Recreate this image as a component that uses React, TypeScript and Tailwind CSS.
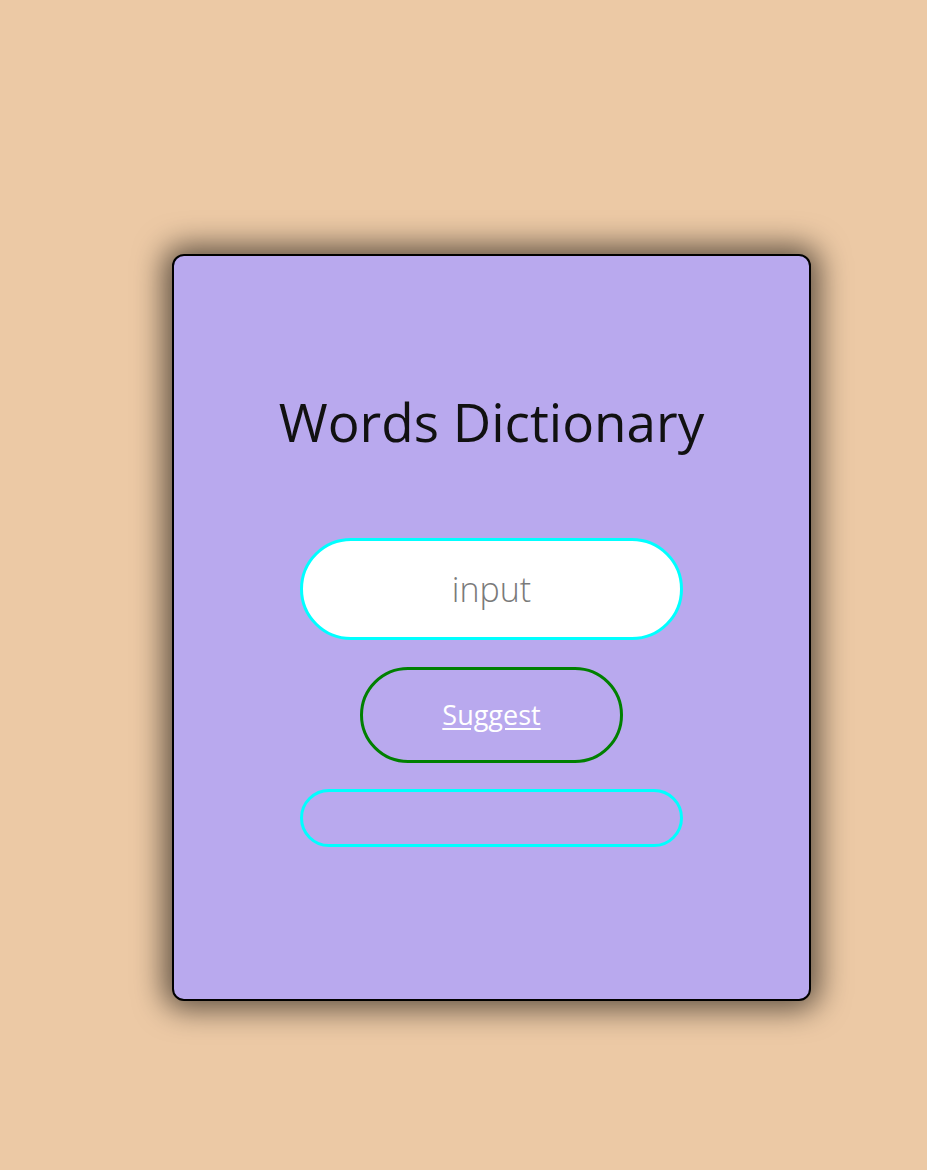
import { useState } from "react";

const App = () => {
  const [word, setWord] = useState("");

  return (
    <div
      className="min-h-[1170px] w-full bg-[#ecc9a5] pt-[254px] pl-[172px]"
      style={{ fontFamily: '"Open Sans", "Noto Sans", sans-serif' }}
    >
      <div className="w-[639px] h-[747px] box-border border-2 border-black rounded-[12px] bg-[#b9a9ee] shadow-[0_0_30px_8px_rgba(0,0,0,0.6)] flex flex-col items-center">
        <h1 className="mt-[136px] text-[53px] leading-[60px] font-normal text-[#111111]">
          Words Dictionary
        </h1>

        <input
          type="text"
          placeholder="input"
          value={word}
          onChange={(e) => setWord(e.target.value)}
          className="mt-[86px] w-[383px] h-[102px] box-border border-[3px] border-[#00ffff] rounded-full bg-white text-center text-[34px] font-light text-black placeholder:text-[#7a7a7a] outline-none"
        />

        <button
          type="button"
          className="mt-[27px] w-[263px] h-[96px] box-border border-[3px] border-[#008000] rounded-full bg-transparent text-white text-[27px] underline underline-offset-[3px] cursor-pointer"
        >
          Suggest
        </button>

        <div className="mt-[26px] w-[383px] h-[58px] box-border border-[3px] border-[#00ffff] rounded-full"></div>
      </div>
    </div>
  );
};

export default App;
